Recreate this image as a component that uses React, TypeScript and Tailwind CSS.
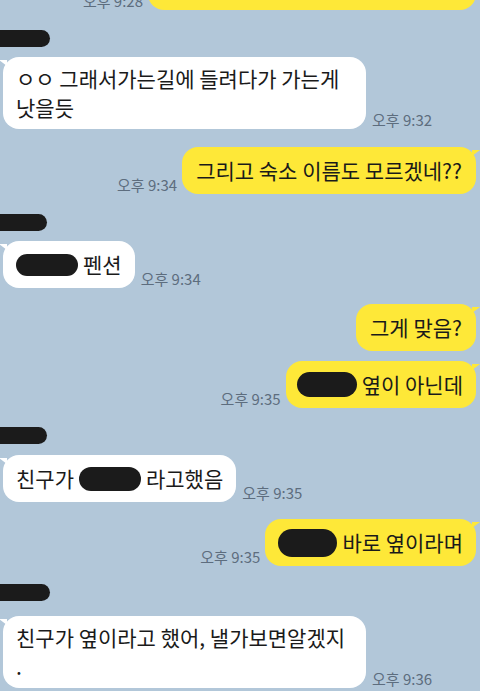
import type { ReactNode } from 'react';

const font = { fontFamily: '"Noto Sans CJK KR", "Noto Sans", sans-serif' };

function Blob({ w, h }: { w: number; h: number }) {
  return (
    <span
      className="inline-block align-middle rounded-full bg-[#1b1b1b]"
      style={{ width: w, height: h }}
    />
  );
}

function Name({ w }: { w: number }) {
  return <div className="h-[17px] rounded-r-full bg-[#1b1b1b]" style={{ width: w }} />;
}

function Time({ children }: { children: ReactNode }) {
  return <span className="shrink-0 text-[15px] leading-[16px] text-[#5d6d7e] mb-[1px]">{children}</span>;
}

function Mine({ children, time, className = '', pad = 'px-[14px]' }: { children: ReactNode; time?: string; className?: string; pad?: string }) {
  return (
    <div className={`flex justify-end items-end gap-[5px] pr-[4px] ${className}`}>
      {time && <Time>{time}</Time>}
      <div className={`relative rounded-[16px] bg-[#fee838] ${pad} py-[9px] text-[21px] leading-[29px] text-[#1a1a1a] flex items-center gap-[5px]`}>
        {children}
        <span className="absolute right-[-4px] top-[3px] w-0 h-0 border-l-[8px] border-l-[#fee838] border-b-[6px] border-b-transparent" />
      </div>
    </div>
  );
}

function Theirs({ children, time, className = '', multi = false }: { children: ReactNode; time?: string; className?: string; multi?: boolean }) {
  return (
    <div className={`flex items-end gap-[6px] pl-[3px] ${className}`}>
      <div
        className={`relative rounded-[16px] bg-white px-[13px] text-[21px] leading-[29px] text-[#1a1a1a] flex items-center gap-[5px] ${
          multi ? 'py-[7px] w-[363px] block' : 'py-[9px]'
        }`}
      >
        {children}
        <span className="absolute left-[-4px] top-[3px] w-0 h-0 border-r-[8px] border-r-white border-b-[6px] border-b-transparent" />
      </div>
      {time && <Time>{time}</Time>}
    </div>
  );
}

export default function App() {
  return (
    <div className="w-[480px] h-[691px] overflow-hidden bg-[#b2c7d9] flex flex-col" style={font}>
      <Mine time="오후 9:28" className="-mt-[37px]">
        <span className="block w-[300px]">&nbsp;</span>
      </Mine>

      <div className="mt-[20px]"><Name w={50} /></div>
      <Theirs multi time="오후 9:32" className="mt-[10px]">
        ㅇㅇ 그래서가는길에 들려다가 가는게
        <br />
        낫을듯
      </Theirs>

      <Mine time="오후 9:34" className="mt-[18px]">그리고 숙소 이름도 모르겠네??</Mine>

      <div className="mt-[20px]"><Name w={47} /></div>
      <Theirs time="오후 9:34" className="mt-[10px]">
        <Blob w={62} h={22} />
        <span>펜션</span>
      </Theirs>

      <Mine className="mt-[16px]">그게 맞음?</Mine>
      <Mine time="오후 9:35" className="mt-[10px]" pad="pl-[11px] pr-[13px]">
        <Blob w={60} h={25} />
        <span>옆이 아닌데</span>
      </Mine>

      <div className="mt-[19px]"><Name w={47} /></div>
      <Theirs time="오후 9:35" className="mt-[11px]">
        <span>친구가</span>
        <Blob w={62} h={24} />
        <span>라고했음</span>
      </Theirs>

      <Mine time="오후 9:35" className="mt-[17px]" pad="pl-[13px] pr-[13px]">
        <Blob w={59} h={28} />
        <span>바로 옆이라며</span>
      </Mine>

      <div className="mt-[18px]"><Name w={50} /></div>
      <Theirs multi time="오후 9:36" className="mt-[15px]">
        친구가 옆이라고 했어, 낼가보면알겠지
        <br />.
      </Theirs>
    </div>
  );
}
